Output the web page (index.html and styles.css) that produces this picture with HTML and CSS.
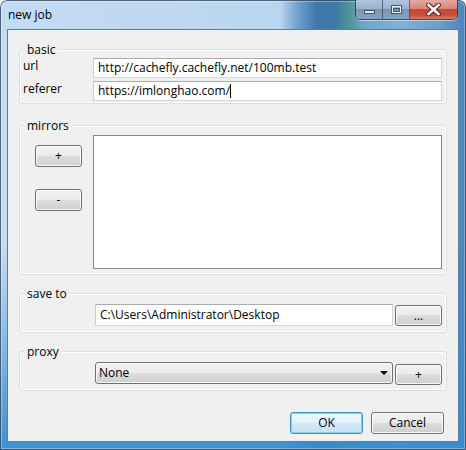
FILE: index.html
```html
<!DOCTYPE html>
<html>
<head>
<meta charset="utf-8">
<title>new job</title>
<link rel="stylesheet" href="styles.css">
</head>
<body>
<div class="window">
  <div class="titlebar">
    <span class="title">new job</span>
    <div class="caption-buttons">
      <div class="cap cap-min">
        <svg width="11" height="4" viewBox="0 0 11 4"><rect x="0.5" y="0.5" width="10" height="3" fill="#e4ebf3" stroke="#41546b"/></svg>
      </div>
      <div class="cap cap-max">
        <svg width="11" height="9" viewBox="0 0 11 9"><rect x="0.5" y="0.5" width="10" height="8" fill="none" stroke="#41546b"/><rect x="1.5" y="1.5" width="8" height="6" fill="none" stroke="#eef3f8"/><rect x="2.5" y="3.5" width="6" height="3" fill="none" stroke="#41546b"/></svg>
      </div>
      <div class="cap cap-close">
        <svg width="15" height="13" viewBox="0 0 15 13"><path d="M2.5 2 L12.5 11 M12.5 2 L2.5 11" stroke="#5a1c14" stroke-width="4.6" stroke-linecap="square" fill="none"/><path d="M2.5 2 L12.5 11 M12.5 2 L2.5 11" stroke="#ffffff" stroke-width="2.6" stroke-linecap="square" fill="none"/></svg>
      </div>
    </div>
  </div>
  <div class="client">
    <section class="group group-basic">
      <div class="legend">basic</div>
      <div class="form-grid">
        <label class="lbl">url</label>
        <div class="textbox">http://cachefly.cachefly.net/100mb.test</div>
        <label class="lbl">referer</label>
        <div class="textbox">https://imlonghao.com/<span class="caret"></span></div>
      </div>
    </section>

    <section class="group group-mirrors">
      <div class="legend">mirrors</div>
      <div class="mirrors-body">
        <div class="mirror-btns">
          <button class="btn btn-small">+</button>
          <button class="btn btn-small">-</button>
        </div>
        <div class="listbox"></div>
      </div>
    </section>

    <section class="group group-save">
      <div class="legend">save to</div>
      <div class="field-row">
        <span></span>
        <div class="textbox textbox-tall">C:\Users\Administrator\Desktop</div>
        <button class="btn btn-side">...</button>
      </div>
    </section>

    <section class="group group-proxy">
      <div class="legend">proxy</div>
      <div class="field-row">
        <span></span>
        <div class="combo"><span>None</span><span class="arrow"></span></div>
        <button class="btn btn-side">+</button>
      </div>
    </section>

    <div class="footer">
      <button class="btn btn-dialog btn-default">OK</button>
      <button class="btn btn-dialog">Cancel</button>
    </div>
  </div>
</div>
</body>
</html>
```

FILE: styles.css
```css
* { box-sizing: border-box; }

html, body {
  margin: 0;
  padding: 0;
  background: #ffffff;
}

body {
  font-family: "Open Sans", "Liberation Sans", sans-serif;
  font-size: 12px;
  color: #000;
}

.window {
  width: 466px;
  height: 450px;
  display: flex;
  flex-direction: column;
  padding: 0 7px 8px 7px;
  border-radius: 7px 7px 0 0;
  background:
    linear-gradient(180deg, rgba(60,150,215,0) 0%, rgba(60,150,215,0) 55%, rgba(52,142,208,0.95) 100%),
    linear-gradient(90deg, #c4dcf3 0%, #bad5ef 60%, #6f9fcc 64%, #3f78ad 68%, #3d7aa8 72%, #4f9596 75%, #6fa6c4 78%, #84b0d8 86%, #6d9dcb 94%, #4a83bd 100%);
  box-shadow: inset 0 0 0 1px rgba(30, 55, 85, 0.75), inset 0 0 0 2px rgba(255, 255, 255, 0.35);
}

.titlebar {
  height: 29px;
  display: flex;
  justify-content: space-between;
  align-items: flex-start;
  flex: none;
}

.title {
  padding: 7px 0 0 1px;
  line-height: 16px;
  color: #000;
}

.caption-buttons {
  display: flex;
  margin-right: 1px;
  height: 20px;
  border: 1px solid rgba(35, 50, 75, 0.8);
  border-top: none;
  border-radius: 0 0 5px 5px;
  overflow: hidden;
  box-shadow: 0 1px 0 rgba(255,255,255,0.5);
}

.cap {
  height: 19px;
  display: flex;
  align-items: center;
  justify-content: center;
}

.cap-min {
  width: 27px;
  align-items: flex-end;
  padding-bottom: 5px;
  background: linear-gradient(180deg, #aec4db 0%, #9ab3cd 45%, #7895b4 50%, #86a3c2 100%);
  border-right: 1px solid rgba(35, 50, 75, 0.6);
}

.cap-max {
  width: 27px;
  background: linear-gradient(180deg, #aec4db 0%, #9ab3cd 45%, #7895b4 50%, #86a3c2 100%);
  border-right: 1px solid rgba(35, 50, 75, 0.6);
}

.cap-close {
  width: 47px;
  background: linear-gradient(180deg, #e4a99f 0%, #d7867a 45%, #c24a36 50%, #c6503b 80%, #d7806c 100%);
}

.client {
  flex: 1;
  border: 1px solid #5d7c9b;
  background: #f0f0f0;
  padding: 0 11px;
  display: flex;
  flex-direction: column;
}

.group {
  border: 1px solid #d5dfe5;
  border-radius: 3px;
  box-shadow: inset 0 0 0 1px #ffffff;
  padding: 0 4px 2px 3px;
}

.legend {
  margin: -8px 0 0 1px;
  height: 16px;
  line-height: 16px;
  padding: 0 3px;
  background: #f0f0f0;
  width: max-content;
}

.group-basic { margin-top: 19px; }
.group-mirrors { margin-top: 21px; padding-bottom: 5px; }
.group-save { margin-top: 18px; padding-bottom: 6px; }
.group-proxy { margin-top: 18px; padding-bottom: 5px; }

.form-grid {
  display: grid;
  grid-template-columns: 70px 1fr;
  grid-auto-rows: 20px;
  row-gap: 3px;
  align-items: start;
}

.lbl {
  line-height: 16px;
}

.textbox {
  height: 20px;
  line-height: 18px;
  padding: 0 4px;
  background: #ffffff;
  border: 1px solid #d3d8de;
  border-top-color: #abadb3;
  border-left-color: #c9ced5;
  white-space: nowrap;
  overflow: hidden;
}

.textbox-tall {
  height: 22px;
  line-height: 20px;
}

.caret {
  display: inline-block;
  width: 1px;
  height: 14px;
  background: #000;
  vertical-align: -3px;
}

.mirrors-body {
  display: grid;
  grid-template-columns: 70px 1fr;
  margin-top: 1px;
}

.mirror-btns {
  display: flex;
  flex-direction: column;
  align-items: flex-start;
  gap: 22px;
  padding: 10px 0 0 12px;
}

.listbox {
  height: 134px;
  background: #ffffff;
  border: 1px solid #828790;
}

.btn {
  font-family: "Open Sans", "Liberation Sans", sans-serif;
  font-size: 12px;
  color: #000;
  margin: 0;
  padding: 0;
  border: 1px solid #707070;
  border-radius: 3px;
  background: linear-gradient(180deg, #f2f2f2 0%, #ebebeb 50%, #dddddd 50%, #cfcfcf 100%);
  box-shadow: inset 0 0 0 1px rgba(252, 252, 252, 0.9);
  line-height: 18px;
}

.btn-small {
  width: 47px;
  height: 22px;
}

.field-row {
  display: grid;
  grid-template-columns: 70px 1fr 47px;
  column-gap: 2px;
  align-items: start;
  margin-top: 2px;
}

.btn-side {
  height: 21px;
  margin-top: 1px;
}

.group-proxy .btn-side {
  margin-top: 2px;
}

.combo {
  height: 22px;
  border: 1px solid #707070;
  border-radius: 3px;
  background: linear-gradient(180deg, #f2f2f2 0%, #ebebeb 50%, #dddddd 50%, #cfcfcf 100%);
  box-shadow: inset 0 0 0 1px rgba(252, 252, 252, 0.9);
  display: flex;
  align-items: center;
  justify-content: space-between;
  padding: 0 4px 0 3px;
  line-height: 20px;
}

.arrow {
  width: 0;
  height: 0;
  border-left: 4px solid transparent;
  border-right: 4px solid transparent;
  border-top: 4px solid #000;
}

.footer {
  display: flex;
  justify-content: flex-end;
  gap: 8px;
  margin: 21px 3px 0 0;
}

.btn-dialog {
  width: 73px;
  height: 22px;
}

.btn-default {
  border-color: #3c8fc1;
  background: linear-gradient(180deg, #eef7fd 0%, #e2f1fb 50%, #d2e9f7 50%, #c6e2f4 100%);
  box-shadow: inset 0 0 0 1px #8fd0f2;
}
```
